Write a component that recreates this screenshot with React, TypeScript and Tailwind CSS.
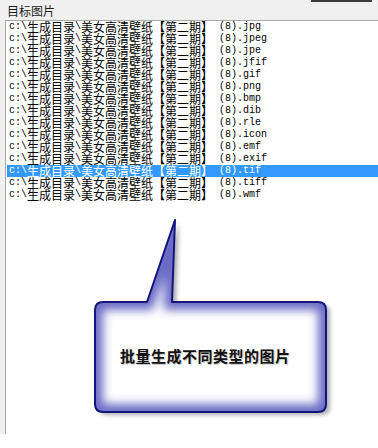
import React from 'react'

const exts = ['jpg', 'jpeg', 'jpe', 'jfif', 'gif', 'png', 'bmp', 'dib', 'rle', 'icon', 'emf', 'exif', 'tif', 'tiff', 'wmf']
const SELECTED = 12

function PathText({ text }: { text: string }) {
  const parts = text.split(/([\x00-\x7f]+)/).filter(Boolean)
  return (
    <>
      {parts.map((p, i) =>
        /^[\x00-\x7f]+$/.test(p) ? (
          <span key={i} className="font-['Liberation_Mono',monospace] text-[10px] whitespace-pre">
            {p}
          </span>
        ) : (
          <span key={i} className="font-['Noto_Sans_CJK_SC',sans-serif] text-[12px] whitespace-pre">
            {p}
          </span>
        ),
      )}
    </>
  )
}

function Callout() {
  const d =
    'M103,302 L147,302 L175,220 L172,302 L318,302 Q326,302 326,310 L326,404 Q326,412 318,412 L103,412 Q95,412 95,404 L95,310 Q95,302 103,302 Z'
  return (
    <div className="absolute left-0 top-0 w-[378px] h-[448px] pointer-events-none">
      <svg width="378" height="448" className="absolute left-0 top-0">
        <defs>
          <clipPath id="bubble">
            <path d={d} />
          </clipPath>
          <filter id="glow" x="-20%" y="-20%" width="140%" height="140%">
            <feGaussianBlur stdDeviation="5" />
          </filter>
          <filter id="shadow" x="-20%" y="-20%" width="140%" height="140%">
            <feGaussianBlur stdDeviation="2" />
          </filter>
        </defs>
        <path d={d} fill="#8a8a8a" opacity="0.7" transform="translate(4,3)" filter="url(#shadow)" />
        <path d={d} fill="#ffffff" />
        <g clipPath="url(#bubble)">
          <path d={d} fill="none" stroke="#5252bc" strokeOpacity="0.85" strokeWidth="16" filter="url(#glow)" />
        </g>
        <path d={d} fill="none" stroke="#14147e" strokeWidth="2" strokeLinejoin="round" />
      </svg>
      <div className="absolute left-[120px] top-[347px] font-['Noto_Sans_CJK_SC',sans-serif] text-[15px] leading-[18px] font-bold tracking-[0.5px] text-[#111] [text-shadow:1px_1px_1px_rgba(0,0,0,0.25)]">
        批量生成不同类型的图片
      </div>
    </div>
  )
}

export default function App() {
  return (
    <div className="relative w-[378px] h-[448px] bg-white overflow-hidden">
      <div className="relative h-[20px] bg-[#f0f0f0] pl-[7px] flex items-center">
        <span className="font-['Noto_Sans_CJK_SC',sans-serif] text-[12px] leading-[14px] text-[#1a1a1a] mt-[1px]">
          目标图片
        </span>
        <div className="absolute top-0 left-[311px] w-[61px] h-[2px] bg-[#3a3a3a]" />
      </div>
      <div className="flex h-[414px] bg-[#f0f0f0]">
        <div className="ml-[5px] flex-1 bg-white border-l border-t border-[#a9a9a9] pl-[1px]">
          {exts.map((ext, i) => (
            <div
              key={ext}
              className={
                i === SELECTED
                  ? 'h-[12px] leading-[12px] pl-[2px] flex items-center bg-[#3399ff] text-white'
                  : 'h-[12px] leading-[12px] pl-[2px] flex items-center text-black'
              }
            >
              <PathText text={`c:\\生成目录\\美女高清壁纸【第二期】 (8).${ext}`} />
            </div>
          ))}
        </div>
      </div>
      <Callout />
    </div>
  )
}
